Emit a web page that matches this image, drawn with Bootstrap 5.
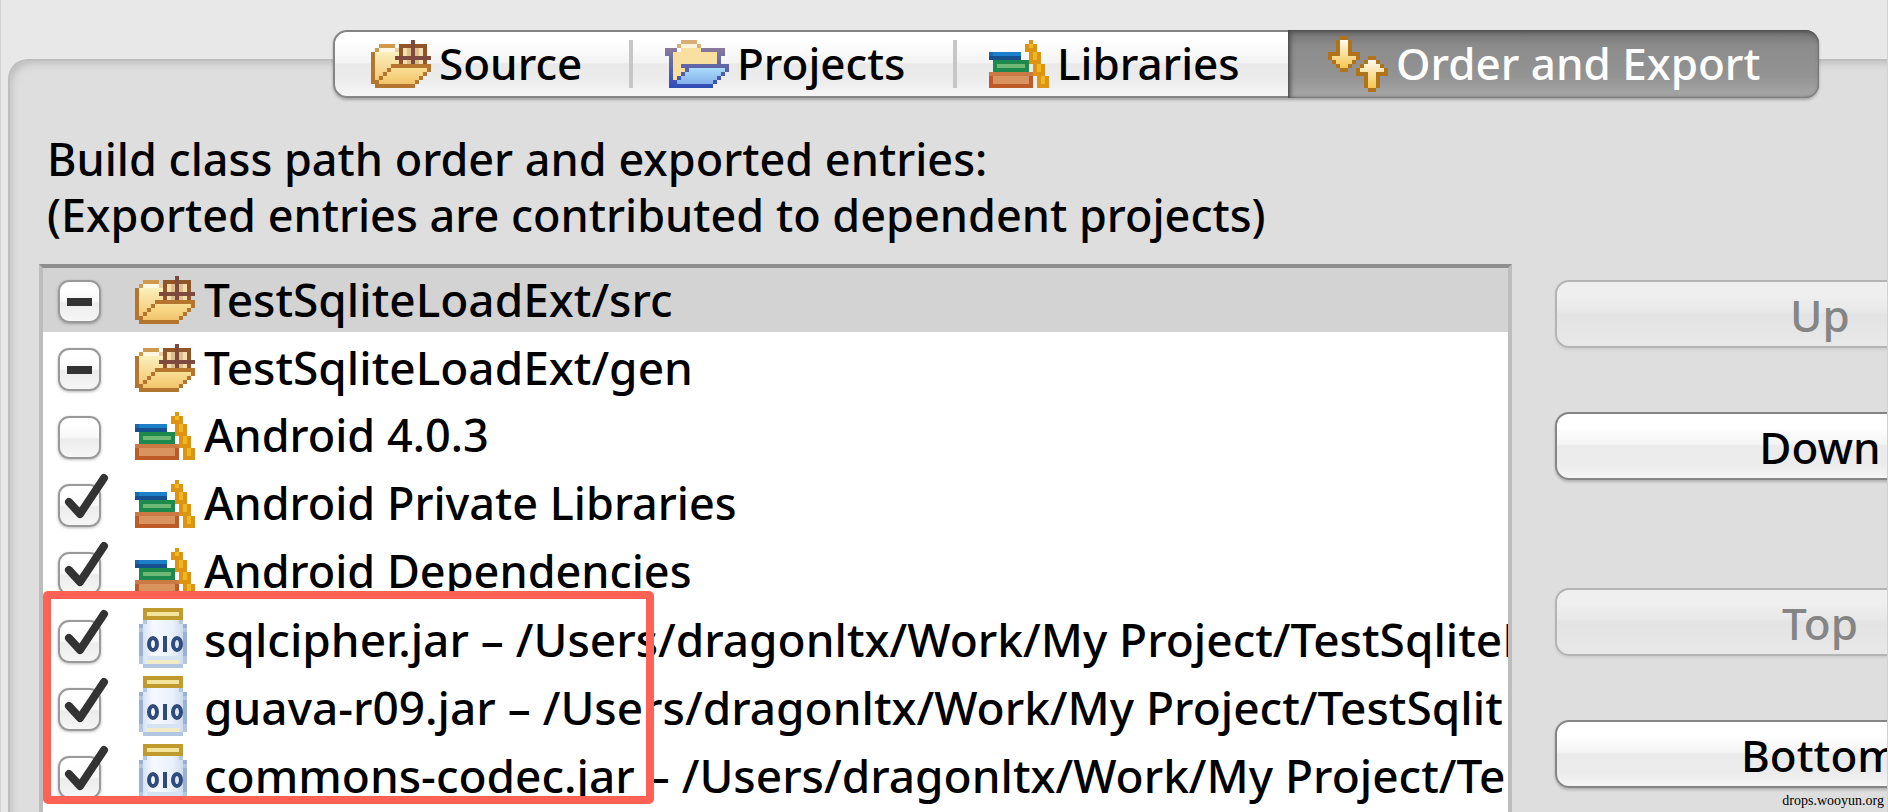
<!DOCTYPE html>
<html lang="en">
<head>
<meta charset="utf-8">
<meta name="viewport" content="width=device-width, initial-scale=1">
<title>Java Build Path</title>
<link rel="stylesheet" href="https://cdn.jsdelivr.net/npm/bootstrap@5.3.0/dist/css/bootstrap.min.css">
<style>
  body { background: #e8e8e8; color: #000; font: 500 45px/56px "Noto Sans", "Open Sans", sans-serif; overflow: hidden; }
  .window-frame { min-height: 100vh; padding-top: 30px; border: solid #d2d2d2; border-width: 0 1px; overflow: hidden; }
  .ico { flex: none; width: 60px; height: 60px; margin-bottom: 8px; overflow: visible; }
  .ico-wide { width: 64px; }
  .caption-text { margin-bottom: 6px; white-space: pre; }

  /* segmented tab bar */
  .segments { position: relative; z-index: 1; margin-left: 332px; width: max-content; border: 2px solid #858585; border-radius: 14px;
    background: linear-gradient(#fff 15%, #f3f3f3 48%, #e9e9e9 50%, #ececec 75%, #f6f6f6); box-shadow: 0 2px 3px #0004; }
  .segment { display: flex; align-items: center; height: 64px; padding: 0 36px; gap: 8px; border: 0; background: none; color: #000; font-size: 44px; font-weight: 500; }
  .segment .caption-text { margin-bottom: 2px; }
  .segment .ico { margin-bottom: 4px; }
  .segment + .segment::before { content: ""; width: 4px; height: 48px; margin-left: -38px; margin-right: 24px; background: #c6c6c6; }
  .segment.active { margin: -2px; height: 68px; padding-left: 40px; padding-right: 50px; color: #fff; border-radius: 0 14px 14px 0;
    background: linear-gradient(#6f6f6f, #8b8b8b 22%, #949494 70%, #a8a8a8); box-shadow: inset 2px 1px 5px #444, inset 0 0 2px #555; }
  .segment.active::before { display: none; }
  .w-source { width: 296px; } .w-projects { width: 324px; } .w-libraries { width: 335px; } .w-order { width: 531px; }

  /* tab page */
  .sheet { margin: -39px 0 0 7px; padding: 70px 0 0 29px; background: #dedede; border: 2px solid #bebebe; border-width: 2px 0 0 2px;
    border-top-left-radius: 20px; box-shadow: inset 4px 5px 8px -3px #bbb; }
  .intro { padding-left: 8px; margin-bottom: 21px; }
  .entries { min-width: 0; border: 4px solid #bdbdbd; border-top-color: #8e8e8e; border-bottom: 0; background: #fff; }
  .entry-rows { overflow: hidden; }
  .entry { height: 68px; padding: 8px 0 0 15px; display: flex; align-items: center; cursor: default; }
  .entry .ico { margin-left: 34px; margin-right: 9px; }
  .entry-path { font-size: 46px; }
  .entry.selected { height: 64px; padding-top: 4px; background: #d3d3d3; }
  .tick { flex: none; appearance: none; position: relative; width: 43px; height: 43px; margin: 0 0 2px; border: 2px solid #999; border-radius: 11px;
    background: linear-gradient(#fff 20%, #f8f8f8 48%, #ececec 55%, #f6f6f6); box-shadow: 0 1px 3px #0004; }
  .tick:indeterminate::after { content: ""; position: absolute; left: 7px; right: 7px; top: 16px; height: 8px; background: #333; }
  .tick:checked::after { content: ""; position: absolute; left: -2px; top: -16px; width: 54px; height: 60px;
    background: url("data:image/svg+xml,%3Csvg xmlns='http://www.w3.org/2000/svg' viewBox='0 0 54 60'%3E%3Cpath d='M11 32L22 44L46 8' fill='none' stroke='%23333' stroke-width='8' stroke-linecap='round' stroke-linejoin='round'/%3E%3C/svg%3E"); }
  .marked { position: relative; padding-bottom: 4px; }
  .marked-frame { position: absolute; left: 0; top: -13px; width: 611px; height: 213px; border: 8px solid #ff6254; border-radius: 5px; pointer-events: none; }

  /* buttons run off the right side of the window */
  .actions { flex: none; width: 375px; padding: 16px 0 0 43px; }
  .push { display: block; width: 530px; height: 68px; padding: 2px 0 0; border: 2px solid #858585; border-radius: 14px; color: #000; font-size: 44px; font-weight: 500;
    background: linear-gradient(#fff 20%, #f5f5f5 46%, #ebebeb 50%, #ececec 80%, #f5f5f5); box-shadow: 0 2px 3px #0003; }
  .push:disabled { color: #858585; border-color: #b4b4b4; background: linear-gradient(#efefef 20%, #e8e8e8 46%, #e3e3e3 50%, #e8e8e8); box-shadow: 0 2px 3px #0001; }
  .push-gap { margin-top: 64px; } .group-gap { margin-top: 108px; }
  .credit { position: absolute; right: 3px; bottom: 3px; font: 14px/16px "Liberation Serif", serif; color: #000; text-decoration: none; }
</style>
</head>
<body>
<svg class="position-absolute" width="0" height="0" aria-hidden="true" xmlns="http://www.w3.org/2000/svg">
  <defs>
    <linearGradient id="gold" x2="0" y2="1"><stop stop-color="#faf0bd"/><stop offset="1" stop-color="#f4c26a"/></linearGradient>
    <linearGradient id="flap" x2="0" y2="1"><stop stop-color="#f9df94"/><stop offset="1" stop-color="#f2c46c"/></linearGradient>
    <linearGradient id="sky" x2="0" y2="1"><stop stop-color="#aadcfb"/><stop offset="1" stop-color="#84b0ea"/></linearGradient>
    <linearGradient id="indigo" x2="0" y2="1"><stop stop-color="#8a7a9a"/><stop offset="1" stop-color="#2d4db8"/></linearGradient>
    <linearGradient id="glass"><stop stop-color="#cbdaee"/><stop offset=".3" stop-color="#f6faff"/><stop offset=".7" stop-color="#eaf1fb"/><stop offset="1" stop-color="#c3d4ea"/></linearGradient>
    <linearGradient id="arrow" x2="0" y2="1"><stop stop-color="#fffaf0"/><stop offset="1" stop-color="#f4c74f"/></linearGradient>
  </defs>
  <symbol id="folder-src" viewBox="0 0 15 15">
    <path fill="url(#gold)" d="M1 5H7V8H14V9L10 13H1z"/>
    <path fill="#fff6e4" d="M2 4h4v1H2z"/><path fill="#e8cfa0" d="M6 4h1v1H6z"/>
    <path fill="url(#flap)" d="M5 9h9v1h-1v1h-1v1h-1v1H2v-1h1v-1h1v-1h1z"/>
    <path fill="#cf9a4b" d="M2 3h4v1H2zM1 4h1v1H1z"/>
    <path fill="#b4762f" d="M0 5h1v8H0zM1 13h10v1H1zM5 8h10v2h-1V9H5zM4 9h1v1H4zM3 10h1v1H3zM2 11h1v1H2zM1 12h1v1H1zM13 10h1v1h-1zM12 11h1v1h-1zM11 12h1v1h-1z"/>
    <path fill="#f6dfae" d="M8 4h5v4H8z"/><path fill="#c99c6e" d="M9 4h1v4H9zM11 4h1v4h-1z" opacity=".5"/>
    <path fill="#91552a" d="M7 3h7v5h-1V4H8v4H7z"/>
    <path fill="#7d4a3d" d="M10 2h1v6h-1zM6 6h9v1H6z"/>
  </symbol>
  <symbol id="folder-prj" viewBox="0 0 16 15">
    <path fill="#f9dfa0" d="M4 3h4v1h1v1h4v4H5v2H4v1H2V5h2z"/><path fill="#fff3da" d="M4 3h4v1H4z"/>
    <path fill="url(#sky)" d="M5 9h10v1h-1v1h-1v1h-1v1H3v-1h1v-1h1z"/>
    <path fill="#d8ae72" d="M4 2h4v1H4zM3 3h1v1H3zM8 3h1v1H8z"/>
    <path fill="url(#indigo)" d="M0 4h3v1H2v8h10v1H1V6H0zM9 4h6v2h-1v2h-1V5H9zM4 8h12v2h-1V9H6v1H5V9H4zM4 10h1v1H4zM3 11h1v1H3zM2 12h1v1H2zM14 10h1v1h-1zM13 11h1v1h-1zM12 12h1v1h-1z"/>
  </symbol>
  <symbol id="books" viewBox="0 0 15 15">
    <path fill="#1b7fca" d="M0 5h8v1H0z"/><path fill="#17508f" d="M0 6h8v1H0z"/><path fill="#1b6aae" d="M0 5h1v1H0z"/>
    <path fill="#1c8a4c" d="M1 7h9v3H1z"/><path fill="#6fb877" d="M2 8h7v1H2z"/>
    <path fill="#bd5a28" d="M0 10h11v4H0z"/><path fill="#d9935f" d="M1 11h9v2H1z"/><path fill="#cc7a45" d="M0 10h11v1H0z"/>
    <path fill="#dd9413" d="M10 2h1v1h1v2h1v3h1v3h1v3h-3v-3h-1V8h-1V5H9V3h1z"/>
    <path fill="#efb822" d="M10 3h1v1h-1zM11 5h1v2h-1zM12 8h1v2h-1zM13 11h1v2h-1z"/>
  </symbol>
  <symbol id="updown" viewBox="0 -1 15 15">
    <path fill="#b0731a" d="M3 0h2v1h1v3h2v2H7v1H6v1H5v1H3V8H2V7H1V6H0V4h2V1h1z"/>
    <path fill="url(#arrow)" d="M3 1h2v4h2v1H6v1H5v1H3V7H2V6H1V5h2z"/>
    <path fill="#b0731a" d="M10 5h2v1h1v1h1v1h1v2h-2v3h-1v1h-2v-1H9v-3H7V8h1V7h1V6h1z"/>
    <path fill="url(#arrow)" d="M10 6h2v1h1v1h1v1h-2v4h-2V9H8V8h1V7h1z"/>
  </symbol>
  <symbol id="jar" viewBox="0 0 15 15">
    <path fill="url(#glass)" d="M3 3h8v1h1v1h1v8h-1v1H2v-1H1V5h1V4h1z"/>
    <path fill="#b3c6e1" d="M2 3h1v1H2zM11 3h1v1h-1zM1 4h1v9H1zM12 4h1v9h-1zM2 14h10v1H2zM1 13h1v1H1zM12 13h1v1h-1z"/>
    <path fill="#8ea9cf" d="M1 4h1v1H1zM12 4h1v1h-1zM1 6h1v6H1zM12 6h1v6h-1z" opacity=".7"/>
    <path fill="#f2ecc6" d="M3 13h8v1H3z"/><path fill="#d5e3f3" d="M3 12h8v1H3z"/>
    <path fill="#c09a2c" d="M2 0h10v3H2z"/><path fill="#f4e39b" d="M3 1h8v1H3z"/>
    <g fill="none" stroke="#2f4a7c" stroke-width="1"><ellipse cx="4.500" cy="9" rx="1" ry="1.500"/><path d="M7.500 7v4"/><ellipse cx="10.500" cy="9" rx="1" ry="1.500"/></g>
  </symbol>
</svg>

<main class="window-frame position-relative">
  <div class="segments d-flex" role="tablist">
    <button class="segment w-source" type="button" role="tab" aria-selected="false"><svg class="ico" aria-hidden="true"><use href="#folder-src"/></svg><span class="caption-text">Source</span></button>
    <button class="segment w-projects" type="button" role="tab" aria-selected="false"><svg class="ico ico-wide" aria-hidden="true"><use href="#folder-prj"/></svg><span class="caption-text">Projects</span></button>
    <button class="segment w-libraries" type="button" role="tab" aria-selected="false"><svg class="ico" aria-hidden="true"><use href="#books"/></svg><span class="caption-text">Libraries</span></button>
    <button class="segment w-order active" type="button" role="tab" aria-selected="true"><svg class="ico" aria-hidden="true"><use href="#updown"/></svg><span class="caption-text">Order and Export</span></button>
  </div>

  <section class="sheet" role="tabpanel">
    <p class="intro">Build class path order and exported entries:<br>(Exported entries are contributed to dependent projects)</p>
    <div class="d-flex">
      <div class="entries flex-grow-1">
        <div class="entry-rows">
          <label class="entry entry-path selected"><input class="tick" type="checkbox" data-mixed><svg class="ico" aria-hidden="true"><use href="#folder-src"/></svg><span class="caption-text">TestSqliteLoadExt/src</span></label>
          <label class="entry entry-path"><input class="tick" type="checkbox" data-mixed><svg class="ico" aria-hidden="true"><use href="#folder-src"/></svg><span class="caption-text">TestSqliteLoadExt/gen</span></label>
          <label class="entry"><input class="tick" type="checkbox"><svg class="ico" aria-hidden="true"><use href="#books"/></svg><span class="caption-text">Android 4.0.3</span></label>
          <label class="entry"><input class="tick" type="checkbox" checked><svg class="ico" aria-hidden="true"><use href="#books"/></svg><span class="caption-text">Android Private Libraries</span></label>
          <label class="entry"><input class="tick" type="checkbox" checked><svg class="ico" aria-hidden="true"><use href="#books"/></svg><span class="caption-text">Android Dependencies</span></label>
          <div class="marked">
            <label class="entry entry-path"><input class="tick" type="checkbox" checked><svg class="ico" aria-hidden="true"><use href="#jar"/></svg><span class="caption-text">sqlcipher.jar – /Users/dragonltx/Work/My Project/TestSqliteL</span></label>
            <label class="entry entry-path"><input class="tick" type="checkbox" checked><svg class="ico" aria-hidden="true"><use href="#jar"/></svg><span class="caption-text">guava-r09.jar – /Users/dragonltx/Work/My Project/TestSqlit</span></label>
            <label class="entry entry-path"><input class="tick" type="checkbox" checked><svg class="ico" aria-hidden="true"><use href="#jar"/></svg><span class="caption-text">commons-codec.jar – /Users/dragonltx/Work/My Project/Te</span></label>
            <div class="marked-frame"></div>
          </div>
        </div>
      </div>
      <div class="actions">
        <button class="push" type="button" disabled>Up</button>
        <button class="push push-gap" type="button">Down</button>
        <button class="push group-gap" type="button" disabled>Top</button>
        <button class="push push-gap" type="button">Bottom</button>
      </div>
    </div>
  </section>
  <a class="credit" href="#">drops.wooyun.org</a>
</main>
<script src="https://cdn.jsdelivr.net/npm/bootstrap@5.3.0/dist/js/bootstrap.bundle.min.js"></script>
<script>
  document.querySelectorAll('[data-mixed]').forEach(function (box) { box.indeterminate = true; });
</script>
</body>
</html>
